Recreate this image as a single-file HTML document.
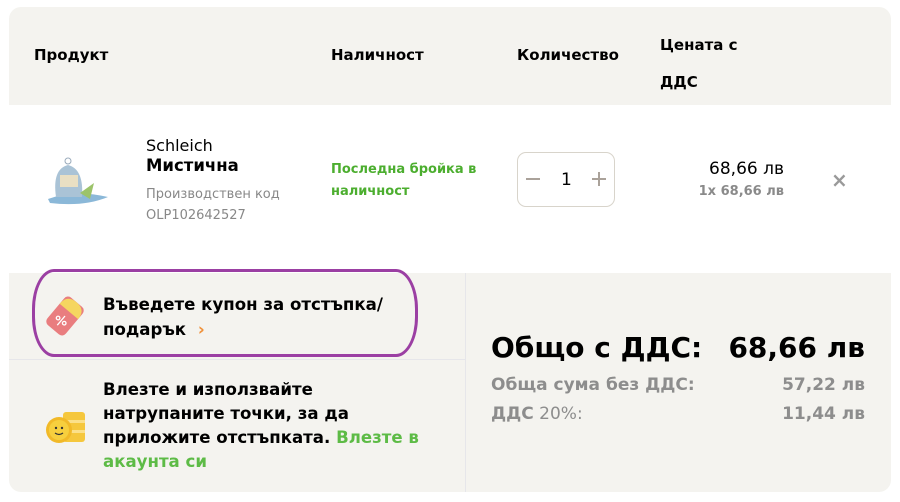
<!DOCTYPE html>
<html><head><meta charset="utf-8"><style>
*{margin:0;padding:0;box-sizing:border-box}
body{width:900px;height:502px;background:#fff;font-family:"DejaVu Sans","Liberation Sans",sans-serif;position:relative;overflow:hidden}
.a{position:absolute;white-space:nowrap}
.b{font-weight:bold}
</style></head><body>
<div class="a" style="left:9px;top:7px;width:882px;height:98px;background:#f4f3ef;border-radius:12px 12px 0 0"></div>
<div class="a" style="left:9px;top:273px;width:882px;height:219px;background:#f4f3ef;border-radius:0 0 12px 12px"></div>
<div class="a" style="left:465px;top:273px;width:1px;height:219px;background:#e6e6ea"></div>
<div class="a" style="left:9px;top:359px;width:456px;height:1px;background:#e6e6ea"></div>

<div class="a b" style="left:34px;top:46px;font-size:15px">Продукт</div>
<div class="a b" style="left:331px;top:46px;font-size:15px">Наличност</div>
<div class="a b" style="left:517px;top:46px;font-size:15px">Количество</div>
<div class="a b" style="left:660px;top:27px;font-size:15px;line-height:37px">Цената с<br>ДДС</div>

<svg class="a" style="left:44px;top:155px" width="66" height="50" viewBox="0 0 66 50">
<path d="M4 44 Q30 34 64 42 Q40 52 6 48Z" fill="#8bb8d8"/>
<path d="M12 42 Q8 14 24 10 Q40 14 38 42Z" fill="#aac3d6"/>
<rect x="16" y="20" width="18" height="12" fill="#e9dfc3"/>
<path d="M36 38 L50 28 L46 44Z" fill="#9cc36a"/>
<circle cx="24" cy="6" r="3" fill="none" stroke="#9ab" stroke-width="1"/>
</svg>
<div class="a" style="left:146px;top:136px;font-size:16px;line-height:20px">Schleich<br><span class="b" style="font-size:16.5px">Мистична</span></div>
<div class="a" style="left:146px;top:184px;font-size:13px;line-height:21px;color:#888">Производствен код<br>OLP102642527</div>
<div class="a b" style="left:331px;top:159px;font-size:13px;line-height:22px;color:#4cae2f">Последна бройка в<br>наличност</div>
<div class="a" style="left:517px;top:152px;width:98px;height:55px;border:1px solid #d8d4cb;border-radius:9px"></div>
<div class="a" style="left:526px;top:178px;width:14px;height:2px;background:#aaa29a"></div>
<div class="a" style="left:592px;top:178px;width:14px;height:2px;background:#aaa29a"></div>
<div class="a" style="left:598px;top:172px;width:2px;height:14px;background:#aaa29a"></div>
<div class="a" style="left:561px;top:170px;font-size:17px">1</div>
<div class="a" style="left:600px;top:159px;width:184px;text-align:right;font-size:17px">68,66 лв</div>
<div class="a b" style="left:600px;top:184px;width:184px;text-align:right;font-size:13px;color:#8a8a8a">1x 68,66 лв</div>
<div class="a b" style="left:831px;top:168px;font-size:20px;color:#9a9a9a">×</div>

<div class="a" style="left:32px;top:269px;width:386px;height:88px;border:3px solid #9b3fa3;border-radius:22px/40px"></div>
<svg class="a" style="left:44px;top:294px" width="42" height="44" viewBox="0 0 42 44">
<g transform="rotate(40 21 22)"><rect x="9" y="4" width="24" height="36" rx="5" fill="#e97d7f"/><path d="M9 16 Q9 4 21 4 Q33 4 33 16Z" fill="#f5d660"/>
<circle cx="17" cy="28" r="1.8" fill="none" stroke="#fff" stroke-width="1.3"/><circle cx="25" cy="28" r="1.8" fill="none" stroke="#fff" stroke-width="1.3"/><line x1="21" y1="22" x2="21" y2="34" stroke="#fff" stroke-width="1.3"/></g>
</svg>
<div class="a b" style="left:103px;top:292px;font-size:16.6px;line-height:25px">Въведете купон за отстъпка/<br>подарък <span style="color:#f0913a;margin-left:6px">›</span></div>

<svg class="a" style="left:45px;top:410px" width="42" height="36" viewBox="0 0 42 36">
<rect x="18" y="2" width="22" height="30" rx="3" fill="#f5c73d"/><rect x="18" y="10" width="22" height="3" fill="#fbe08a"/><rect x="18" y="20" width="22" height="3" fill="#fbe08a"/>
<circle cx="14" cy="20" r="13" fill="#f1b928"/><circle cx="14" cy="20" r="10" fill="#f7cf3e"/>
<circle cx="11" cy="18" r="1.2" fill="#333"/><circle cx="17" cy="18" r="1.2" fill="#333"/><path d="M10 23 Q14 26 18 23" stroke="#333" fill="none" stroke-width="1.2"/>
</svg>
<div class="a b" style="left:103px;top:378px;font-size:16.6px;line-height:24px">Влезте и използвайте<br>натрупаните точки, за да<br>приложите отстъпката. <span style="color:#5dbb46">Влезте в<br>акаунта си</span></div>

<div class="a b" style="left:491px;top:331px;font-size:28px">Общо с ДДС:</div>
<div class="a b" style="left:680px;top:331px;width:185px;text-align:right;font-size:28px">68,66 лв</div>
<div class="a b" style="left:491px;top:375px;font-size:17px;color:#8d8d8d">Обща сума без ДДС:</div>
<div class="a b" style="left:680px;top:375px;width:185px;text-align:right;font-size:17px;color:#8d8d8d">57,22 лв</div>
<div class="a" style="left:491px;top:404px;font-size:17px;color:#8d8d8d"><b>ДДС</b> 20%:</div>
<div class="a b" style="left:680px;top:404px;width:185px;text-align:right;font-size:17px;color:#8d8d8d">11,44 лв</div>
</body></html>
